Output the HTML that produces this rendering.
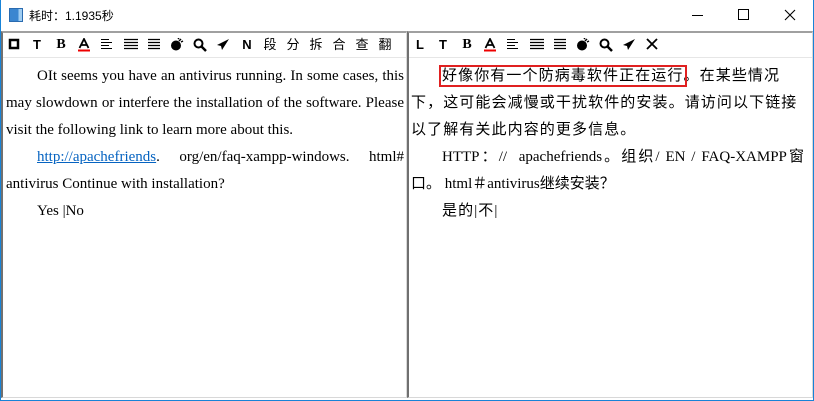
<!DOCTYPE html>
<html><head><meta charset="utf-8"><style>
*{margin:0;padding:0;box-sizing:border-box}
body{width:814px;height:401px;background:#fff;position:relative;overflow:hidden;font-family:"Liberation Sans","Noto Sans CJK SC",sans-serif}
.win{position:absolute;left:0;top:0;width:814px;height:401px;border:1px solid #1883d7;border-top:none}
.title{position:absolute;left:29px;top:7px;font-size:12px;color:#000}
.ico{position:absolute;left:9px;top:8px;width:14px;height:14px;background:linear-gradient(90deg,#3a86d0 0 70%,#9fcdf2 70%);border:1px solid #2a6bb0}
.panel{position:absolute;top:31px;height:367px;border-top:2px solid #a0a0a0;border-left:2px solid #707070;border-right:1px solid #d8d8d8;border-bottom:1px solid #d8d8d8;background:#fff}
.tb{position:absolute;left:0;top:0;right:0;height:25px;border-bottom:1px solid #e6e6e6;font-weight:bold;font-size:13px}
.tb span{position:absolute;top:3px;width:16px;height:18px;text-align:center;line-height:18px}
.tb svg{display:block;margin:2px auto 0}
.cjk{font-weight:normal}
.txt{position:absolute;left:3px;right:3px;top:30px;font-family:"Liberation Serif","Noto Sans CJK SC",serif;font-size:15px;line-height:27px;text-align:justify;color:#000}
.txt p{text-indent:31px}
.cn{font-size:15px}
.ls{letter-spacing:1.1px;text-align:left}
a{color:#0563c1}
</style></head><body>
<div class="win"></div>
<div class="ico"></div>
<div class="title">耗时：1.1935秒</div>
<svg style="position:absolute;left:0;top:0" width="814" height="30">
<line x1="692" y1="15.5" x2="703" y2="15.5" stroke="#000"/>
<rect x="738.5" y="9.5" width="10" height="10" fill="none" stroke="#000"/>
<path d="M785 10 L795 20 M795 10 L785 20" stroke="#000" stroke-width="1.1"/>
</svg>

<div class="panel" style="left:1px;width:406px">
 <div class="tb">
  <span style="left:3px"><svg width="12" height="12"><rect x="2" y="2" width="8" height="8" fill="none" stroke="#000" stroke-width="2.5"/></svg></span>
  <span style="left:26px">T</span>
  <span style="left:50px;font-family:'Liberation Serif',serif;font-size:14px">B</span>
  <span style="left:73px"><svg width="12" height="14"><path d="M1.5 10 L6 1 L10.5 10 M3.5 7 H8.5" stroke="#000" stroke-width="1.8" fill="none"/><rect x="0" y="11.5" width="12" height="2" fill="#e00"/></svg></span>
  <span style="left:96px"><svg width="12" height="12"><path d="M0 1.5H8M0 4.5H11M0 7.5H8M0 10.5H11" stroke="#000"/></svg></span>
  <span style="left:120px"><svg width="14" height="12"><path d="M0 1.5H14M0 4.5H14M0 7.5H14M0 10.5H14" stroke="#000" stroke-width="1.3"/></svg></span>
  <span style="left:143px"><svg width="12" height="12"><path d="M0 1.5H12M0 4.5H12M0 7.5H12M0 10.5H12" stroke="#000" stroke-width="1.2"/></svg></span>
  <span style="left:166px"><svg width="14" height="13"><circle cx="6" cy="7.5" r="5" fill="#000"/><path d="M9 3L11 1M11 4L13 3M8 1L9 0" stroke="#000" stroke-width="1.5"/></svg></span>
  <span style="left:189px"><svg width="14" height="14"><circle cx="5.5" cy="5.5" r="4" fill="none" stroke="#000" stroke-width="2"/><path d="M8.5 8.5L13 13" stroke="#000" stroke-width="2.5"/></svg></span>
  <span style="left:212px"><svg width="14" height="13"><path d="M13 1L1 7L5 8L6 12Z" fill="#000"/></svg></span>
  <span style="left:236px">N</span>
  <span style="left:259px" class="cjk">段</span>
  <span style="left:282px" class="cjk">分</span>
  <span style="left:305px" class="cjk">拆</span>
  <span style="left:328px" class="cjk">合</span>
  <span style="left:351px" class="cjk">查</span>
  <span style="left:374px" class="cjk">翻</span>
 </div>
 <div class="txt" style="left:3px;right:2px;top:30px">
  <p>OIt seems you have an antivirus running. In some cases, this may slowdown or interfere the installation of the software. Please visit the following link to learn more about this.</p>
  <p><a href="#">http://apachefriends</a>.&nbsp;&nbsp;&nbsp;&nbsp; org/en/faq-xampp-windows.&nbsp;&nbsp;&nbsp;&nbsp; html# antivirus Continue with installation?</p>
  <p>Yes |No</p>
 </div>
</div>

<div class="panel" style="left:407px;width:406px">
 <div class="tb">
  <span style="left:3px">L</span>
  <span style="left:26px">T</span>
  <span style="left:50px;font-family:'Liberation Serif',serif;font-size:14px">B</span>
  <span style="left:73px"><svg width="12" height="14"><path d="M1.5 10 L6 1 L10.5 10 M3.5 7 H8.5" stroke="#000" stroke-width="1.8" fill="none"/><rect x="0" y="11.5" width="12" height="2" fill="#e00"/></svg></span>
  <span style="left:96px"><svg width="12" height="12"><path d="M0 1.5H8M0 4.5H11M0 7.5H8M0 10.5H11" stroke="#000"/></svg></span>
  <span style="left:120px"><svg width="14" height="12"><path d="M0 1.5H14M0 4.5H14M0 7.5H14M0 10.5H14" stroke="#000" stroke-width="1.3"/></svg></span>
  <span style="left:143px"><svg width="12" height="12"><path d="M0 1.5H12M0 4.5H12M0 7.5H12M0 10.5H12" stroke="#000" stroke-width="1.2"/></svg></span>
  <span style="left:166px"><svg width="14" height="13"><circle cx="6" cy="7.5" r="5" fill="#000"/><path d="M9 3L11 1M11 4L13 3M8 1L9 0" stroke="#000" stroke-width="1.5"/></svg></span>
  <span style="left:189px"><svg width="14" height="14"><circle cx="5.5" cy="5.5" r="4" fill="none" stroke="#000" stroke-width="2"/><path d="M8.5 8.5L13 13" stroke="#000" stroke-width="2.5"/></svg></span>
  <span style="left:212px"><svg width="14" height="13"><path d="M13 1L1 7L5 8L6 12Z" fill="#000"/></svg></span>
  <span style="left:235px"><svg width="12" height="12"><path d="M1 1L11 11M11 1L1 11" stroke="#000" stroke-width="1.8"/></svg></span>
 </div>
 <div class="txt cn" style="left:2px;right:8px;top:30px">
  <p class="ls"><span style="outline:2px solid #e02020;outline-offset:1px">好像你有一个防病毒软件正在运行</span>。在某些情况下，这可能会减慢或干扰软件的安装。请访问以下链接以了解有关此内容的更多信息。</p>
  <p>HTTP：//&nbsp; apachefriends。组织/ EN / FAQ-XAMPP窗口。 html＃antivirus继续安装？</p>
  <p class="ls">是的|不|</p>
 </div>
</div>
</body></html>
